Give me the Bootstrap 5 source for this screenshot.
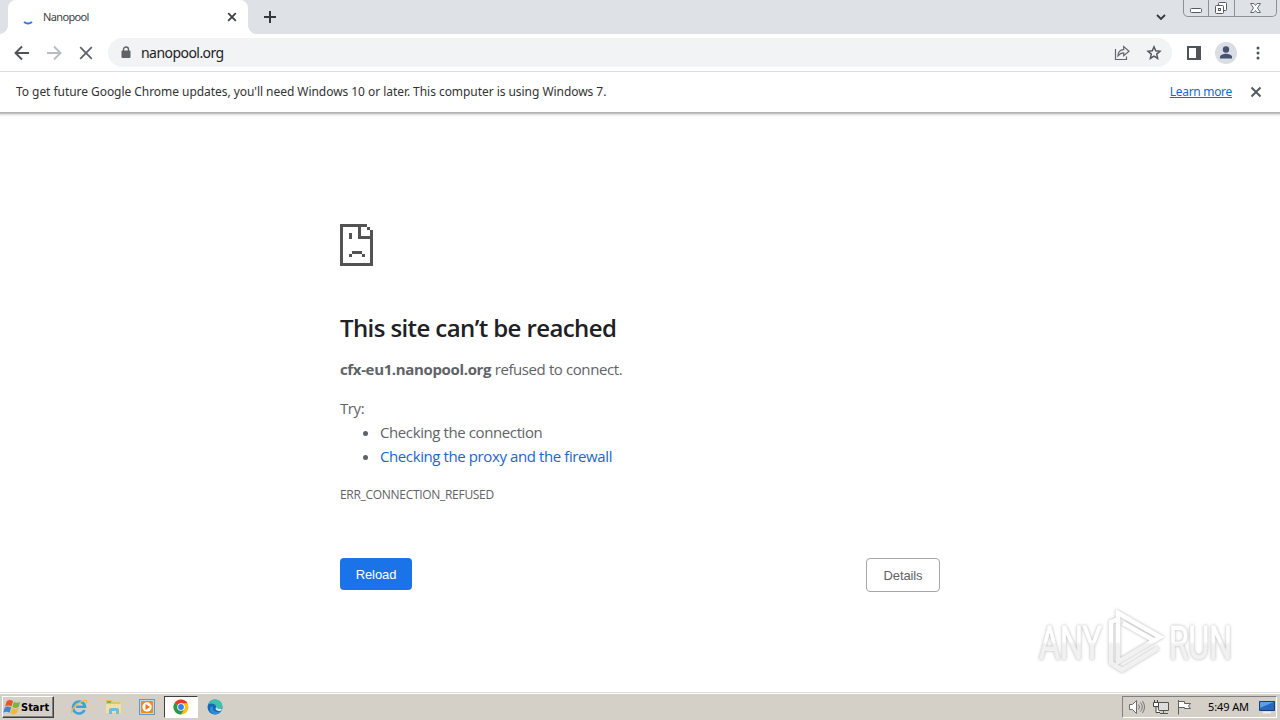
<!DOCTYPE html>
<html lang="en">
<head>
  <meta charset="UTF-8">
  <meta name="viewport" content="width=device-width, initial-scale=1.0">
  <title>Nanopool</title>
  <link href="https://cdn.jsdelivr.net/npm/bootstrap@5.3.0/dist/css/bootstrap.min.css" rel="stylesheet">
  <style>
    body{height:720px;overflow:hidden;background:#fff;color:#3c4043;font-family:"Open Sans","Noto Sans",sans-serif;}
    svg{display:block;flex:none;}
    .ui{font-family:"Noto Sans","Open Sans",sans-serif;white-space:nowrap;}

    /* tab strip */
    .tabstrip{height:34px;background:#dee1e6;padding-left:8px;}
    .chrome-tab{width:240px;height:34px;background:#fff;border-radius:8px 8px 0 0;padding:0 10px 0 13px;position:relative;}
    .chrome-tab::before,.chrome-tab::after{content:"";position:absolute;bottom:0;width:8px;height:8px;}
    .chrome-tab::before{left:-8px;background:radial-gradient(circle at 0 0,#dee1e6 7.5px,#fff 8px);}
    .chrome-tab::after{right:-8px;background:radial-gradient(circle at 100% 0,#dee1e6 7.5px,#fff 8px);}
    .tab-title{font-size:11px;letter-spacing:-.65px;margin-left:8px;}
    .win-buttons{width:94px;height:17px;border:1px solid #8d9097;border-top:0;border-radius:0 0 5px 5px;margin-right:3px;}
    .win-buttons > span{border-right:1px solid #8d9097;}
    .win-buttons > span:last-child{border-right:0;}

    /* toolbar */
    .toolbar{height:38px;border-bottom:1px solid #dcdddf;padding-left:14px;}
    .omnibox{width:1064px;height:29px;border-radius:15px;background:#f1f3f4;margin-left:14px;padding:0 10px 0 12px;}
    .omni-url{font-size:14px;color:#202124;margin-left:9px;letter-spacing:-.55px;}
    .avatar{width:22px;height:22px;border-radius:50%;background:#dadde3;overflow:hidden;}

    .infobar{height:40px;font-size:12px;letter-spacing:-.05px;padding:0 18px 0 16px;color:#333;}
    .infobar a{color:#1a67c9;letter-spacing:-.3px;}
    .info-shadow{height:5px;background:linear-gradient(#b3b3b3 0 1px,#c0c0c0 1px 2px,#e2e2e2 2px 3px,#f3f3f3 3px 4px,#fbfbfb 4px);}

    /* error page */
    .viewport{height:575px;}
    .error-box{width:600px;padding-top:107px;color:#5f6368;font-size:15px;line-height:24px;letter-spacing:-.4px;}
    .error-box h1{font-size:24px;line-height:30px;font-weight:600;letter-spacing:-.6px;color:#202124;margin:47px 0 0;}
    .error-box p{margin:0;}
    .error-box strong{letter-spacing:-.35px;}
    .error-box ul{margin:0;padding-left:40px;}
    .error-box a{color:#1967c8;text-decoration:none;}
    .err-code{font-size:12px;line-height:18px;letter-spacing:-.3px;}
    .page-btn{font-family:"Liberation Sans",Arial,sans-serif;font-size:13px;line-height:16px;letter-spacing:-.1px;border-radius:4px;}
    .reload-btn{width:72px;height:32px;background:#1a73e8;color:#fff;padding:2px 0 0;}
    .details-btn{width:74px;height:34px;background:#fff;color:#5f6368;border:1px solid #a4a7ab;padding:2px 0 0;}
    .watermark{position:absolute;left:1030px;top:603px;}

    /* taskbar */
    .taskbar{height:28px;background:#d4d0c8;border-top:1px solid #dedbd5;box-shadow:inset 0 1px #fff;padding:2px 3px 1px 2px;}
    .start-btn{width:52px;height:22px;border:1px solid;border-color:#fff #404040 #404040 #fff;box-shadow:inset -1px -1px #808080;font:bold 11px "DejaVu Sans Condensed","DejaVu Sans",sans-serif;color:#000;}
    .task-item{width:34px;height:22px;}
    .task-active{background:#fff;border:1px solid;border-color:#404040 #fff #fff #404040;}
    .tray{width:155px;height:22px;border:1px solid;border-color:#808080 #fff #fff #808080;padding:0 1px 0 5px;color:#000;font-size:11px;letter-spacing:-.1px;}
  </style>
</head>
<body>
<!-- tab strip -->
<div class="tabstrip d-flex ui">
  <div class="chrome-tab d-flex align-items-center">
    <svg width="14" height="16" viewBox="0 0 14 16"><path d="M3 13Q7 16 11 13" fill="none" stroke="#3479d8" stroke-width="2"/></svg>
    <span class="tab-title">Nanopool</span>
    <svg class="ms-auto" width="12" height="12" viewBox="0 0 12 12"><path d="M2.200 2.200l7.600 7.600M9.800 2.200l-7.600 7.600" stroke="#3c4043" stroke-width="1.800"/></svg>
  </div>
  <svg class="align-self-center" style="margin-left:16px" width="12" height="12" viewBox="0 0 12 12"><path d="M6 0v12M0 6h12" stroke="#34373b" stroke-width="2"/></svg>
  <svg class="ms-auto align-self-center" style="margin-right:17px" width="10" height="8" viewBox="0 0 10 8"><path d="M1 2l4 4 4-4" fill="none" stroke="#34373b" stroke-width="1.800"/></svg>
  <div class="win-buttons d-flex">
    <span class="d-flex" style="width:25px"><svg width="24" height="16" viewBox="0 0 24 16"><rect x="6.500" y="8.500" width="11" height="4" rx="1" fill="#fff" stroke="#555a66"/></svg></span>
    <span class="d-flex" style="width:26px"><svg width="24" height="16" viewBox="0 0 24 16"><g fill="#fff" stroke="#555a66"><rect x="9.500" y="2.500" width="8" height="8" rx="1"/><rect x="6.500" y="5.500" width="8" height="8" rx="1"/><rect x="9.500" y="8.500" width="2" height="2"/></g></svg></span>
    <span class="d-flex flex-fill"><svg width="41" height="16" viewBox="0 0 41 16"><path d="M15.500 3.500h3.500l1.500 2 1.500-2h3.500l-3 4.500 3 4.500h-3.500l-1.500-2-1.500 2h-3.500l3-4.500z" fill="#fff" stroke="#666b76"/></svg></span>
  </div>
</div>

<!-- toolbar -->
<div class="toolbar d-flex align-items-center ui">
  <svg width="16" height="16" viewBox="0 0 16 16"><path d="M15 8H2M8 1.500L1.500 8 8 14.500" fill="none" stroke="#505357" stroke-width="1.900"/></svg>
  <svg style="margin-left:16px" width="16" height="16" viewBox="0 0 16 16"><path d="M1 8h13M8 1.500L14.500 8 8 14.500" fill="none" stroke="#babcbe" stroke-width="1.900"/></svg>
  <svg style="margin-left:16px" width="16" height="16" viewBox="0 0 16 16"><path d="M2.200 2.200l11.600 11.600M13.800 2.200L2.200 13.800" stroke="#5f6368" stroke-width="1.800"/></svg>
  <div class="omnibox d-flex align-items-center">
    <svg width="12" height="14" viewBox="0 0 12 14"><rect x="1.500" y="4.500" width="9" height="7.500" rx="1" fill="#5f6368"/><path d="M3.500 5V3.500a2.500 2.500 0 0 1 5 0V5" fill="none" stroke="#5f6368" stroke-width="1.400"/></svg>
    <span class="omni-url">nanopool.org</span>
    <svg class="ms-auto" width="16" height="16" viewBox="0 0 16 16"><path d="M1.500 4v10.500h11V11.500M4 11C4 7 6 4.800 9.700 4.600V1.500L15 6.300l-5.300 4.500V7.900C7.200 7.900 5.500 9 4 11z" fill="none" stroke="#62666a" stroke-width="1.200"/></svg>
    <svg style="margin-left:16px" width="16" height="16" viewBox="0 0 16 16"><path d="M8 1.800l1.700 4 4.300.4-3.300 2.900 1 4.300L8 11.100l-3.700 2.300 1-4.300L2 6.200l4.300-.4z" fill="none" stroke="#505357" stroke-width="1.400"/></svg>
  </div>
  <svg style="margin-left:15px" width="14" height="14" viewBox="0 0 14 14"><path d="M0 0h14v14H0zM2 2v10h7V2z" fill="#505357" fill-rule="evenodd"/></svg>
  <div class="avatar" style="margin-left:14px"><svg width="22" height="22" viewBox="0 0 22 22"><circle cx="11" cy="7.500" r="3.200" fill="#45516e"/><path d="M5 16.500v-1.700c0-2 4-3 6-3s6 1 6 3v1.700z" fill="#45516e"/></svg></div>
  <svg style="margin-left:19px" width="4" height="14" viewBox="0 0 4 14"><g fill="#505357"><circle cx="2" cy="2" r="1.500"/><circle cx="2" cy="7" r="1.500"/><circle cx="2" cy="12" r="1.500"/></g></svg>
</div>

<!-- infobar -->
<div class="infobar d-flex align-items-center ui">
  <span>To get future Google Chrome updates, you'll need Windows 10 or later. This computer is using Windows 7.</span>
  <a href="#" class="ms-auto">Learn more</a>
  <svg style="margin-left:18px" width="12" height="12" viewBox="0 0 12 12"><path d="M1.500 1.500l9 9M10.500 1.500l-9 9" stroke="#55585c" stroke-width="1.900"/></svg>
</div>
<div class="info-shadow"></div>

<!-- page -->
<main class="viewport">
  <div class="error-box mx-auto">
    <svg width="33" height="42" viewBox="0 0 33 42" shape-rendering="crispEdges"><path d="M0 0h27v3H21v9h9V6h3v36H0zM3 3v36h27V15H18V3zM27 3h3v3h-3zM9 9h3v6H9zM12 27h10v3H12zM9 30h3v3H9zM22 30h3v3h-3z" fill="#535353" fill-rule="evenodd"/></svg>
    <h1>This site can’t be reached</h1>
    <p style="margin-top:14px"><strong>cfx-eu1.nanopool.org</strong> refused to connect.</p>
    <p style="margin-top:15px">Try:</p>
    <ul>
      <li>Checking the connection</li>
      <li><a href="#">Checking the proxy and the firewall</a></li>
    </ul>
    <p class="err-code" style="margin-top:18px">ERR_CONNECTION_REFUSED</p>
    <div class="d-flex justify-content-between align-items-start" style="margin-top:54px">
      <button class="btn page-btn reload-btn border-0">Reload</button>
      <button class="btn page-btn details-btn">Details</button>
    </div>
  </div>
</main>

<!-- watermark over the page -->
<svg class="watermark" width="225" height="78" viewBox="0 0 225 78">
  <defs>
    <linearGradient id="wm" gradientUnits="userSpaceOnUse" x1="0" y1="0" x2="0" y2="74"><stop offset=".52" stop-color="#fff"/><stop offset=".56" stop-color="#f1f1f1"/></linearGradient>
  </defs>
  <g style="filter:drop-shadow(0 0 1.500px #b4b4b4)">
    <g fill="url(#wm)" stroke="url(#wm)" stroke-width="1" font-family="Roboto,sans-serif" font-size="46">
      <text x="9" y="56" textLength="63" lengthAdjust="spacingAndGlyphs">ANY</text>
      <text x="139" y="56" textLength="63" lengthAdjust="spacingAndGlyphs">RUN</text>
    </g>
    <path d="M88 16l-7 3v41l11 7 36-22M88 51V10l42 24-42 25V49M93 20l30 17" fill="none" stroke="url(#wm)" stroke-width="4.500"/>
  </g>
</svg>

<!-- taskbar -->
<footer class="taskbar d-flex align-items-center ui">
  <div class="start-btn d-flex align-items-center">
    <svg width="18" height="17" viewBox="0 0 17 16"><path d="M3.500 2q3-2 6 0L8 7q-3-2-6 0z" fill="#e8552d"/><path d="M10.300 2.500q3 2 6 0L14.800 7.500q-3 2-6 0z" fill="#7db43c"/><path d="M1.700 8q3-2 6 0L6.200 13q-3-2-6 0z" fill="#3e86d2"/><path d="M8.500 8.500q3 2 6 0l-1.500 5q-3 2-6 0z" fill="#f3b92b"/></svg>
    <span>Start</span>
  </div>
  <div class="task-item d-flex align-items-center justify-content-center" style="margin-left:8px">
    <svg width="18" height="18" viewBox="0 0 18 18"><path d="M14.500 12A6 6 0 1 1 15 8.800H6" fill="none" stroke="#3ba3dc" stroke-width="2.600"/><path d="M2 15C-1 12 12 1 16.500 2.500q1 1-1 3.500" fill="none" stroke="#eebd3c" stroke-width="1.300"/></svg>
  </div>
  <div class="task-item d-flex align-items-center justify-content-center">
    <svg width="17" height="16" viewBox="0 0 17 16"><path d="M1 1h6l1 2h7v9H1z" fill="#e4c565"/><path d="M2 2h4v2H2z" fill="#78b35b"/><path d="M1 5h15v9H1z" fill="#f5dfa0"/><path d="M4 15v-4q0-2 2-2h6q2 0 2 2v4h-3v-3H7v3z" fill="#77b9dc"/></svg>
  </div>
  <div class="task-item d-flex align-items-center justify-content-center">
    <svg width="16" height="16" viewBox="0 0 16 16"><rect x=".5" y=".5" width="15" height="15" fill="#b9d9ee" stroke="#5a9bc9"/><rect x="2" y="2" width="12" height="12" rx="1" fill="#f08a1d"/><circle cx="8" cy="8" r="4.700" fill="#fff"/><path d="M6.500 5v6l4.500-3z" fill="#e87513"/></svg>
  </div>
  <div class="task-item task-active d-flex align-items-center justify-content-center">
    <svg width="16" height="16" viewBox="0 0 16 16"><circle cx="8" cy="8" r="7.500" fill="#fbc116"/><path d="M8 8L1.500 4.250A7.500 7.500 0 0 1 14.500 4.250H8z" fill="#e33b2e"/><path d="M8 8L1.500 4.250A7.500 7.500 0 0 0 8 15.500l3.250-5.600z" fill="#249a4b"/><circle cx="8" cy="8" r="3.800" fill="#fff"/><circle cx="8" cy="8" r="2.900" fill="#3c7de6"/></svg>
  </div>
  <div class="task-item d-flex align-items-center justify-content-center">
    <svg width="16" height="16" viewBox="0 0 16 16"><circle cx="8" cy="8" r="7.500" fill="#1767b5"/><path d="M1 5.500Q4 0 9 .6q6 1 6.400 6.400.1 3.500-4 3.600-3 0-2-2Q9 5 5 4.500q-2.500 0-4 1z" fill="#40c1ae"/><path d="M6 7q-1.500 5 4 6 3 .3 4-1-2 4-7 3.200Q2 13 3 9q1-2 3-2z" fill="#2590dc"/><path d="M9.500 8.200q1 2.500 5.700 1.600l-1.200 2q-5 1-5.500-2.500z" fill="#d4e8ef"/></svg>
  </div>

  <div class="tray d-flex align-items-center ms-auto">
    <svg width="18" height="16" viewBox="0 0 18 16"><path d="M1.500 5.500h3l4-4v13l-4-4h-3z" fill="#fff" stroke="#6b6b6b"/><path d="M10.500 5.500q2 2.500 0 5M12.500 3.500q3.500 4.500 0 9M14.500 2q4 6 0 12" fill="none" stroke="#777"/></svg>
    <svg style="margin-left:7px" width="17" height="16" viewBox="0 0 17 16"><path d="M5.500 3.500h10v8h-10zM7 14.500h8M10.500 12v2" fill="#ddd" stroke="#555"/><path d="M.5 3.500h5v4h-5zM1.500 1v2M4.500 1v2M3 8v5.500h4" fill="#fff" stroke="#444"/></svg>
    <svg style="margin-left:6px" width="16" height="16" viewBox="0 0 16 16"><path d="M2.500 1v14.500M2.500 2.500h6v2h6l-2 2.500 2 2.500h-6v-1h-6" fill="#fff" stroke="#606060"/></svg>
    <span class="ms-auto" style="margin-right:10px">5:49 AM</span>
    <svg width="16" height="16" viewBox="0 0 16 16"><path d="M.5 2.500h15v9H.5z" fill="#2767be" stroke="#193d78"/><path d="M1 3h14L1 9z" fill="#5ba0e2"/><path d="M4 13.500h8" stroke="#eee" stroke-width="2"/></svg>
  </div>
</footer>
<script src="https://cdn.jsdelivr.net/npm/bootstrap@5.3.0/dist/js/bootstrap.bundle.min.js"></script>
</body>
</html>
